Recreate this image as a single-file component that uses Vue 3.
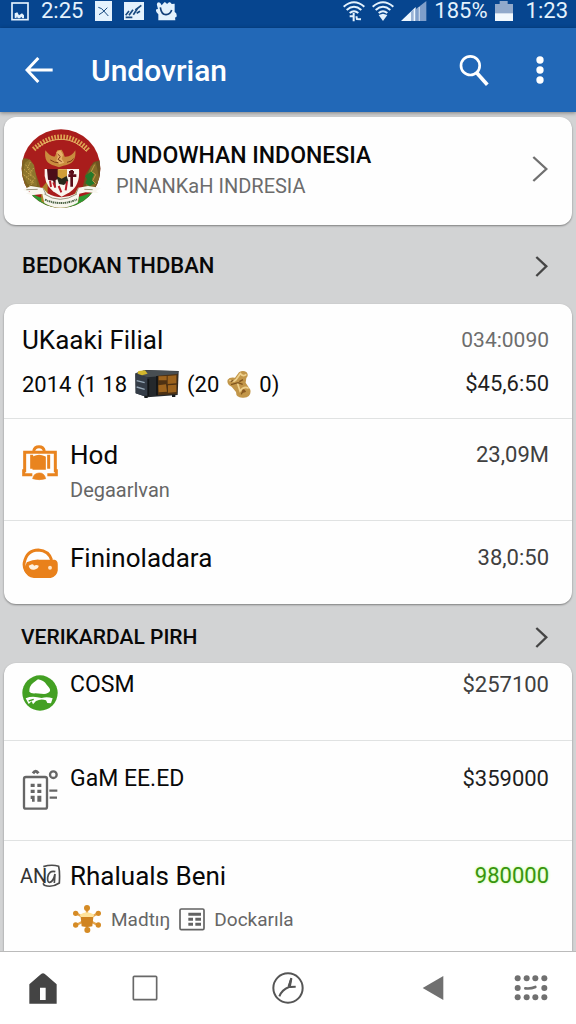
<template>
  <div class="screen">
    <!-- Status bar -->
    <div class="status-bar">
      <div class="status-left">
        <svg width="18" height="19" viewBox="0 0 54 57" fill="none" stroke="#e4f2fd">
          <rect x="3" y="3" width="48" height="50" stroke-width="5" />
          <path d="M11 47V34l8-3 5 9 9-6 6 6v9h-5l-3-5-4 5h-7l-2-6-2 6z" fill="#e4f2fd" stroke="none" />
        </svg>
        <span class="clock">2:25</span>
        <svg width="17" height="20" viewBox="0 0 51 60">
          <path d="M0 0h51v60H0z" fill="#e4f2fd" />
          <path d="M10 19l10 4 20 22M12 41l12-8 13-13" fill="none" stroke="#17497f" stroke-width="3" />
        </svg>
        <svg width="20" height="18" viewBox="0 0 60 54">
          <path d="M0 0h60v54H0z" fill="#e4f2fd" />
          <path d="M5 40l10-13M15 40l12-17M28 38l12-18M34 24l18-14M5 46h20M38 34l10-6" fill="none" stroke="#17497f" stroke-width="5" />
        </svg>
        <svg width="21" height="19" viewBox="0 0 63 57">
          <path d="M3 10Q1 1 9 1q5 1 8 9L25 1q4-2 8 5l6-5q5-2 8 5l9-1v25q7 3 6 12 0 5-5 4l1 9H7V37Q-3 28 1 22l5-1z" fill="#e4f2fd" />
          <path d="M13 16q3 22 17 22 13-1 17-14" fill="none" stroke="#123f78" stroke-width="5" />
        </svg>
      </div>
      <div class="status-right">
        <svg width="22" height="21" viewBox="0 0 66 63" fill="none" stroke="#e4f2fd" stroke-width="6">
          <path d="M2 17Q33-10 64 17M11 27q22-19 44 0M20 36q13-11 26 0" />
          <path d="M20 46l14 0M32 36v25M40 46l2 8 12 1" />
        </svg>
        <svg width="22" height="21" viewBox="0 0 66 63" fill="none" stroke="#e4f2fd" stroke-width="6">
          <path d="M2 17Q33-10 64 17M11 27q22-19 44 0M20 36q13-11 26 0" />
          <path d="M20 42l13 18 13-18-13-4z" fill="#e4f2fd" stroke="none" />
        </svg>
        <svg width="26" height="20" viewBox="0 0 78 60">
          <path d="M0 60L44 18v42z" fill="#eef7ff" />
          <path d="M30 32l8-7v35h-8z" fill="#9ab4d6" />
          <path d="M44 25L76 0v60H44z" fill="#7f9fcb" />
          <path d="M55 18v42" stroke="#c1d2e8" stroke-width="4" />
        </svg>
        <span class="clock">185%</span>
        <svg width="18" height="20" viewBox="0 0 54 60">
          <path d="M0 9h14V0h24v9h16v51H0z" fill="#91a9cb" />
          <path d="M0 37h54v23H0z" fill="#f2f8fd" />
        </svg>
        <span class="clock last">1:23</span>
      </div>
    </div>

    <!-- App bar -->
    <header class="app-bar">
      <button class="icon-btn" aria-label="Back">
        <svg width="28" height="26" viewBox="0 0 84 78" fill="none" stroke="#fff" stroke-width="9">
          <path d="M40 3L6 39l34 36M6 39h77" />
        </svg>
      </button>
      <h1 class="app-title">Undovrian</h1>
      <button class="icon-btn" aria-label="Search">
        <svg width="30" height="31" viewBox="0 0 90 93" fill="none" stroke="#fff">
          <circle cx="34" cy="32" r="28" stroke-width="8" />
          <path d="M53 53l32 36" stroke-width="11" />
        </svg>
      </button>
      <button class="icon-btn" aria-label="More options">
        <svg width="8" height="28" viewBox="0 0 24 84" fill="#fff">
          <circle cx="12" cy="12" r="11" />
          <circle cx="12" cy="42" r="11" />
          <circle cx="12" cy="72" r="11" />
        </svg>
      </button>
    </header>

    <main class="content">
      <!-- Profile -->
      <a href="#" class="card profile">
        <svg class="emblem" width="80" height="82" viewBox="0 0 240 246">
          <defs>
            <clipPath id="disc"><circle cx="120" cy="122" r="118" /></clipPath>
          </defs>
          <g clip-path="url(#disc)">
            <path d="M0 0h240v246H0z" fill="#a91d1c" />
            <path d="M0 180q60 40 120 36t120-36v66H0z" fill="#2f9a32" />
            <path d="M0 90l22 2 24 50 14 42-60 8z" fill="#7d6420" />
            <path d="M240 96l-22 6-24 36-10 46 56 8z" fill="#6d5420" />
          </g>
          <path d="M38 64Q82 24 126 27q42 2 78 42" fill="none" stroke="#dfa552" stroke-width="15" stroke-dasharray="5 4" />
          <path d="M46 61Q84 32 126 34q38 2 70 36" fill="none" stroke="#e6b468" stroke-width="3" />
          <path d="M73 67q18 22 29 18l7-18 13-2 5 9 4 12q20 2 32-19 5 41-36 46l-13 5-13-5Q67 107 73 67z" fill="#c98c3e" />
          <path d="M106 72l12-5 8 13-4 12 8 12-15 5-9-11 4-12z" fill="#e7b269" />
          <path d="M110 78l8 8-7 8 11 7M88 96q14 9 24 8M138 103q14-2 20-11" stroke="#7d3717" stroke-width="3" fill="none" />
          <path d="M12 104l14-10 13 17 6 30 3 34-28-7-15-28z" fill="#8e762d" />
          <path d="M13 110l20 20M9 124l25 23M8 140l30 24M28 102l-9 18 12 16-14 13 20 15-13 11M38 120l-12 16 16 15-13 14" stroke="#c7a54d" stroke-width="3" stroke-dasharray="5 3" fill="none" />
          <path d="M224 103l-14 12-10 24-5 36 26 3 14-28z" fill="#846a28" />
          <path d="M201 137l13-9 5 12-6 13 8 13-15 9-13-9 5-13-6-9z" fill="#237a2b" />
          <path d="M221 110l-10 20 13 10-9 18 10 10" stroke="#bf9b46" stroke-width="3" fill="none" />
          <path d="M60 182l20-24v42q32 22 78 1l15-25v44q-54 40-112 0z" fill="#ad842b" />
          <path d="M71 123h103q4 49-28 70l-24 13-26-16q-29-24-25-67z" fill="#faf5ee" />
          <path d="M78 123h34v29l-8 4v24l-8-22-15-3z" fill="#4c0e18" />
          <path d="M110 124h28v32l-12 9-16-13z" fill="#cf9e37" />
          <path d="M106 144l16 8 15-8 5 15-13 12-15-3z" fill="#262719" />
          <path d="M97 163l6 16M87 158l3 19M138 160l-4 27M113 174l8 19" stroke="#b61a25" stroke-width="6" />
          <path d="M152 126v50M142 143h24M144 133h15" stroke="#5b0c18" stroke-width="8" />
          <path d="M5 186l24-12 37 6 13 16q42 23 84 1l9-18 29-5 39 6-15 9 8 6-39-2-19 4-5 27q-52 30-100 1l-6-27-32 4-17-6 13-5z" fill="#f8f6ee" />
          <path d="M66 180l9 19M172 180l-8 20M70 198q46 32 98 0M16 185l34-1M190 184l25 1" fill="none" stroke="#9d9780" stroke-width="3" />
          <path d="M72 215q48 21 96-1" fill="none" stroke="#496143" stroke-width="6" stroke-dasharray="5 2 3 2" />
        </svg>
        <div class="profile-text">
          <strong class="profile-name">UNDOWHAN INDONESIA</strong>
          <span class="profile-sub">PINANKaH INDRESIA</span>
        </div>
        <svg width="16" height="26" viewBox="0 0 48 78" fill="none" stroke="#707070" stroke-width="7">
          <path d="M4 3l39 36L4 75" />
        </svg>
      </a>

      <a href="#" class="section-head tall">
        <h2 class="section-title">BEDOKAN THDBAN</h2>
        <svg width="13" height="21" viewBox="0 0 39 63" fill="none" stroke="#454545" stroke-width="7">
          <path d="M4 3l30 28L4 60" />
        </svg>
      </a>

      <!-- Balance -->
      <section class="card">
        <div class="row summary">
          <div class="line">
            <span class="name">UKaaki Filial</span>
            <span class="amount grey">034:0090</span>
          </div>
          <div class="line">
            <span class="detail">
              2014 (1 18
              <svg width="44" height="28" viewBox="0 0 132 84">
                <path d="M1 10L30 0l101 3-3 72-91 7L2 70z" fill="#24282c" />
                <path d="M1 12l36 10v60L2 70z" fill="#343c47" />
                <path d="M1 11L30 1l101 3-5 10-89 8z" fill="#484e52" />
                <path d="M10 3l20-2 8 10-17 5-13-5z" fill="#d2b62e" />
                <path d="M67 17l61-5-2 61-59 2z" fill="#4d3113" />
                <path d="M71 19l24-1v13H71zM98 18l26-2v24l-26 2zM70 46l23-3 3 22-25 2zM99 46l25-2v22l-25 2z" fill="#9c631e" />
                <path d="M5 32l24 6M5 51l24 7" stroke="#96a7b7" stroke-width="4" />
                <path d="M40 27v51M66 18v58" stroke="#111416" stroke-width="5" />
                <path d="M28 77h10v7H28zM111 74h10v7h-10z" fill="#171a1b" />
              </svg>
              (20
              <svg width="24" height="27" viewBox="0 0 72 81">
                <path d="M2 26q6-9 22-6L36 4q12-8 23 0 7 9-1 17l-2 14 14 21q4 22-20 24-23 2-23-17L14 47Q-2 40 2 26z" fill="#c29649" />
                <path d="M7 28q12 7 21-3L40 8q9 10 18 2M31 35l8 25q12-16 26-8" stroke="#efd18d" stroke-width="5" fill="none" />
                <path d="M12 41l21-6 14 5M48 26l-11 6M43 70q4-13 13-8M11 32l8-4" stroke="#80551e" stroke-width="4" fill="none" />
                <circle cx="50" cy="60" r="5" fill="#8a5923" />
              </svg>
              0)
            </span>
            <span class="amount dark">$45,6:50</span>
          </div>
        </div>

        <div class="row product">
          <svg class="row-icon" width="36" height="36" viewBox="0 0 108 108" fill="none" stroke="#e9841f" stroke-width="9">
            <path d="M35 18q3-13 16-13t16 13" />
            <path d="M34 22H8v55H5v12h26M69 22h31v55h3v12H76M29 29v42M80 29v42M31 22h41" />
            <path d="M36 38q15-8 31 0v32H36z" fill="#e9841f" />
            <path d="M32 101q3-16 19-17t20 17q-19 6-39 0z" fill="#e9841f" stroke-width="2" />
          </svg>
          <div class="row-text">
            <span class="name">Hod</span>
            <span class="sub">Degaarlvan</span>
          </div>
          <span class="amount">23,09M</span>
        </div>

        <div class="row finance">
          <svg class="row-icon" width="36" height="31" viewBox="0 0 110 96">
            <path d="M26 83Q3 70 6 46 14 6 50 6q32 2 41 31" stroke="#e9811b" stroke-width="9" fill="none" />
            <path d="M14 44q20-9 38-8h48q10 2 10 14v20q-3 19-22 23H36Q14 90 5 68z" fill="#e9811b" />
            <path d="M20 55q3 14 17 12 14-3 14-12-8-5-14 0-4-6-9-4z" fill="#fff2df" />
            <circle cx="86" cy="61" r="6" fill="#ffe5c6" />
          </svg>
          <div class="row-text">
            <span class="name">Fininoladara</span>
          </div>
          <span class="amount">38,0:50</span>
        </div>
      </section>

      <a href="#" class="section-head">
        <h2 class="section-title small">VERIKARDAL PIRH</h2>
        <svg width="13" height="21" viewBox="0 0 39 63" fill="none" stroke="#454545" stroke-width="7">
          <path d="M4 3l30 28L4 60" />
        </svg>
      </a>

      <!-- Payments -->
      <section class="card last-card">
        <div class="row first-pay">
          <svg class="row-icon" width="36" height="36" viewBox="0 0 108 108">
            <circle cx="54" cy="54" r="53" fill="#43a023" />
            <path d="M22 50q-1-17 12-27l14-10q17 3 26 16 12 12 10 19-5 8-18 9l-26-2q-14 1-18-5z" fill="#fff" />
            <path d="M11 70q18-7 35-3l13 2q16-5 33 1l-5 15-11-1-4-8q-15-6-30 2l-9 10-4-9-9 8z" fill="#fff" />
            <path d="M20 78l15-5" stroke="#43a023" stroke-width="4" fill="none" />
          </svg>
          <div class="row-text">
            <span class="name caps">COSM</span>
          </div>
          <span class="amount">$257100</span>
        </div>

        <div class="row second-pay">
          <svg class="row-icon" width="36" height="41" viewBox="0 0 108 123" fill="none" stroke="#666" stroke-width="7">
            <rect x="6" y="24" width="69" height="95" rx="6" />
            <path d="M33 13q8-12 16 0" stroke-width="9" />
            <circle cx="94" cy="17" r="10" />
            <path d="M26 49h12M46 49h12M26 67h12M46 67h12M26 85h12M46 85h12M30 93h8M46 93h12" stroke-width="10" />
            <path d="M82 65h24M83 86h22" />
          </svg>
          <div class="row-text">
            <span class="name caps">GaM EE.ED</span>
          </div>
          <span class="amount dark">$359000</span>
        </div>

        <div class="row third-pay">
          <span class="mark">
            <span class="mark-text">AN</span>
            <svg class="mark-box" width="20" height="24" viewBox="0 0 60 72" fill="none" stroke="#4b4b4b" stroke-width="5">
              <path d="M7 8q25-8 46-1 4 17 2 50-22 15-45 7l-4-6" />
              <path d="M43 23q-19-5-23 17-1 16 6 15 11-2 16-25l-2 27" />
            </svg>
          </span>
          <div class="row-text">
            <span class="name">Rhaluals Beni</span>
            <span class="tags">
              <svg width="30" height="28" viewBox="0 0 90 84" fill="#d58b25">
                <path d="M45 10v64M12 25l66 36M78 25L12 61" stroke="#e6a64d" stroke-width="7" />
                <circle cx="45" cy="9" r="9" />
                <circle cx="11" cy="25" r="8" />
                <circle cx="79" cy="25" r="8" />
                <circle cx="11" cy="60" r="8" />
                <circle cx="79" cy="60" r="8" />
                <circle cx="46" cy="75" r="9" />
                <path d="M23 29q22-15 44 0l-4 8H27z" fill="#ffe39b" />
                <path d="M26 36h38l-3 28q-16 4-32 0z" fill="#cf8320" />
              </svg>
              <span>Madtıŋ</span>
              <svg width="26" height="23" viewBox="0 0 78 69" fill="none" stroke="#626262" stroke-width="5">
                <rect x="3" y="3" width="72" height="62" rx="4" />
                <path d="M28 19h38M28 34h14M49 34h17M28 49h14M49 49h17" stroke-width="9" />
              </svg>
              <span>Dockarıla</span>
            </span>
          </div>
          <span class="amount green">980000</span>
        </div>
      </section>
    </main>

    <!-- Bottom navigation -->
    <nav class="bottom-nav">
      <button class="icon-btn" aria-label="Home">
        <svg width="28" height="31" viewBox="0 0 84 93" fill="#444">
          <path fill-rule="evenodd" d="M42 1q4 0 10 6l31 27v58H1V34L32 7q6-6 10-6zM33 44v37h17V44z" />
        </svg>
      </button>
      <button class="icon-btn" aria-label="Recent">
        <svg width="26" height="26" viewBox="0 0 78 78" fill="none" stroke="#686868" stroke-width="5">
          <rect x="4" y="4" width="70" height="70" rx="3" />
        </svg>
      </button>
      <button class="icon-btn" aria-label="History">
        <svg width="32" height="32" viewBox="0 0 96 96" fill="none" stroke="#555">
          <circle cx="48" cy="48" r="44" stroke-width="6" />
          <path d="M22 73q8-20 29-28l20-1M51 45l7-27" stroke-width="6" />
          <path d="M47 42l8-23 6 1-4 22 15 1-17 5z" fill="#555" stroke="none" />
        </svg>
      </button>
      <button class="icon-btn" aria-label="Back">
        <svg width="22" height="26" viewBox="0 0 66 78" fill="#707070">
          <path d="M2 39L64 3v72z" />
        </svg>
      </button>
      <button class="icon-btn" aria-label="Keyboard">
        <svg width="34" height="26" viewBox="0 0 102 78" fill="#707070">
          <circle v-for="dot in dots" :key="dot.x + '-' + dot.y" :cx="dot.x" :cy="dot.y" r="9" />
          <path d="M34 40q16 2 30-4" fill="none" stroke="#707070" stroke-width="8" stroke-linecap="round" />
        </svg>
      </button>
    </nav>
  </div>
</template>

<script setup>
// Keypad dots, the middle row only has its outer two
const dots = [
  { x: 11, y: 10 }, { x: 38, y: 10 }, { x: 64, y: 10 }, { x: 91, y: 10 },
  { x: 11, y: 39 }, { x: 91, y: 39 },
  { x: 11, y: 67 }, { x: 38, y: 67 }, { x: 64, y: 67 }, { x: 91, y: 67 }
];
</script>

<style>
body {
  margin: 0;
  background: #d2d3d4;
}
</style>

<style scoped>
.screen {
  min-height: 100vh;
  display: flex;
  flex-direction: column;
  background: #d2d3d4;
  color: #080808;
  font-family: Roboto, 'Liberation Sans', sans-serif;
}

svg {
  display: block;
  flex: none;
}

a {
  color: inherit;
  text-decoration: none;
}

/* Status bar */
.status-bar {
  display: flex;
  justify-content: space-between;
  align-items: center;
  height: 22px;
  padding: 0 8px 6px 11px;
  background: #06458f;
  color: #e4f2fd;
}

.status-left,
.status-right {
  display: flex;
  align-items: center;
  gap: 7px;
}

.status-left { gap: 12px; }
.clock { font-size: 22px; line-height: 22px; }
.last { margin-left: 6px; }

/* App bar */
.app-bar {
  display: flex;
  align-items: center;
  height: 84px;
  padding: 0 32px 0 25px;
  background: #2268b7;
  color: #fff;
  box-shadow: 0 1px 4px rgba(0, 0, 0, 0.4);
}

.app-title {
  flex: 1;
  margin: 0 0 0 38px;
  font-size: 30px;
  font-weight: 500;
}

.icon-btn {
  display: flex;
  justify-content: center;
  align-items: center;
  padding: 0;
  border: none;
  background: none;
  cursor: pointer;
}

.icon-btn + .icon-btn { margin-left: 47px; }

/* Cards */
.content {
  flex: 1;
  display: flex;
  flex-direction: column;
  padding: 5px 4px 0;
}

.card {
  background: #fefefe;
  border-radius: 12px;
  box-shadow: 0 1px 2px rgba(0, 0, 0, 0.4);
}

.last-card {
  flex: 1;
  border-radius: 12px 12px 0 0;
}

.profile {
  display: flex;
  align-items: center;
  padding: 11px 24px 15px 17px;
}

.profile-text {
  flex: 1;
  display: flex;
  flex-direction: column;
  margin-left: 15px;
  padding-top: 4px;
}

.profile-name {
  font-size: 23px;
  font-weight: 500;
  line-height: 30px;
}

.profile-sub {
  color: #6c6c6c;
  font-size: 20px;
  line-height: 30px;
}

.section-head {
  display: flex;
  justify-content: space-between;
  align-items: center;
  padding: 18px 24px 11px 17px;
}

.section-head.tall { padding: 26px 24px 23px 18px; }

.section-title {
  margin: 0;
  font-size: 22px;
  font-weight: 500;
  line-height: 30px;
}

.section-title.small { font-size: 21px; }

/* Rows */
.row {
  display: flex;
  align-items: flex-start;
  padding: 18px 23px 13px 18px;
  border-bottom: 1px solid #e0e2e2;
}

.row:last-child { border-bottom: none; }

.summary {
  flex-direction: column;
  padding: 14px 23px 12px 18px;
}

.line {
  display: flex;
  justify-content: space-between;
  align-items: center;
  align-self: stretch;
  height: 44px;
}

.detail {
  display: flex;
  align-items: center;
  gap: 8px;
  font-size: 22px;
}

.row-icon {
  width: 36px;
  margin-top: 8px;
}

.row-text {
  flex: 1;
  display: flex;
  flex-direction: column;
  margin-left: 12px;
}

.name {
  font-size: 26px;
  line-height: 36px;
}

.name.caps { font-size: 23px; }

.sub {
  color: #666;
  font-size: 20px;
  line-height: 34px;
}

.amount {
  color: #404040;
  font-size: 22px;
  line-height: 36px;
}

.grey {
  color: #6d6d6d;
  font-size: 21px;
}

.dark { color: #1f1f1f; }

.green {
  color: #38950e;
  text-shadow: 0 0 3px #b7ff82;
}

.finance { padding: 19px 23px 25px 18px; }
.first-pay { padding: 4px 23px 29px 18px; }
.second-pay { padding: 20px 23px 30px 18px; }
.third-pay { padding: 17px 23px 6px 16px; }

.mark {
  display: flex;
  align-items: center;
  width: 38px;
  height: 36px;
}

.mark-text {
  color: #333;
  font-size: 20px;
}

.mark-box { margin-left: -6px; }

.tags {
  display: flex;
  align-items: center;
  gap: 9px;
  height: 50px;
  padding-left: 2px;
  color: #666;
  font-size: 19px;
}

/* Bottom navigation */
.bottom-nav {
  display: grid;
  grid-template-columns: 86fr 118fr 168fr 121fr 75fr;
  align-items: center;
  height: 72px;
  padding-right: 8px;
  background: #fff;
  border-top: 1px solid #bbb;
}

.bottom-nav .icon-btn { margin: 0; }
</style>
